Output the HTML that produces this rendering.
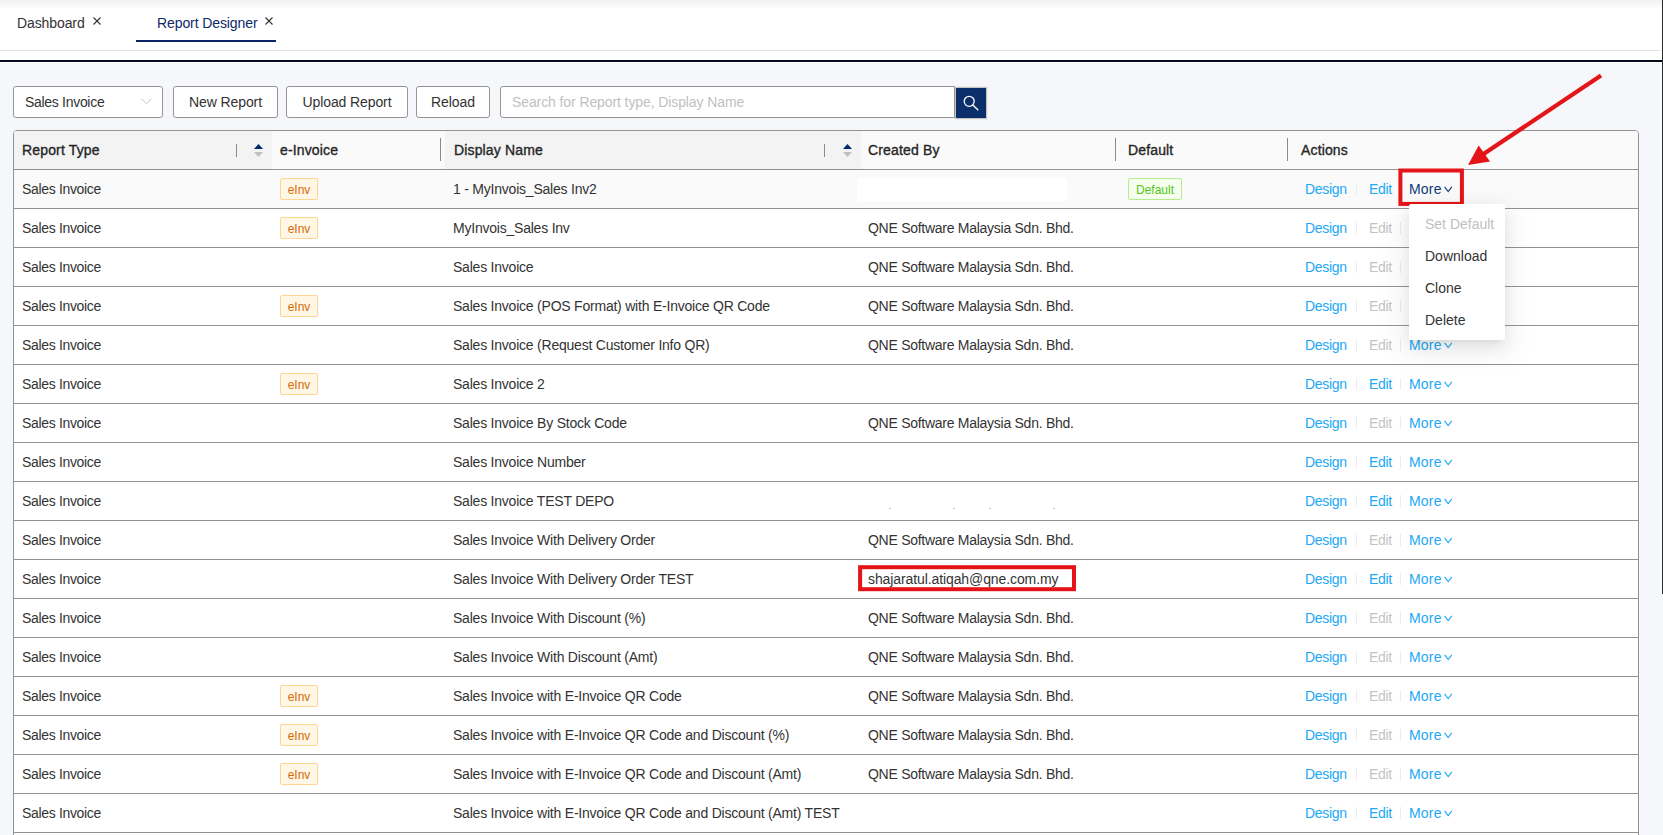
<!DOCTYPE html>
<html><head><meta charset="utf-8">
<style>
*{box-sizing:border-box}
html,body{margin:0;padding:0}
body{width:1663px;height:835px;overflow:hidden;position:relative;background:#f5f7fb;font-family:"Liberation Sans",sans-serif;font-size:14px;letter-spacing:-0.3px;color:#333}
.abs{position:absolute}
#hdr{position:absolute;left:0;top:0;width:1662px;height:63px;background:#fff}
#shade{position:absolute;left:0;top:0;width:1662px;height:9px;background:linear-gradient(#f1f1f1,#fff)}
#gline{position:absolute;left:0;top:50px;width:1661px;height:1px;background:#e2e2e2}
#dline{position:absolute;left:0;top:60px;width:1662px;height:2px;background:#030b1c}
#vline{position:absolute;left:1662px;top:0;width:1px;height:594px;background:#2a2a2a}
#vwhite{position:absolute;left:1661px;top:62px;width:1px;height:532px;background:#fff}
.tab{position:absolute;top:14px;line-height:18px;font-size:14px;letter-spacing:-0.1px;white-space:nowrap}
.x{position:absolute;top:17px}
#uline{position:absolute;left:136px;top:40px;width:140px;height:2px;background:#0a2466}
.btn{position:absolute;top:86px;height:32px;border:1px solid #959595;border-radius:3px;background:#fff;line-height:30px;text-align:center;white-space:nowrap;letter-spacing:-0.1px}
#sel{left:13px;width:150px;text-align:left;padding-left:11px;letter-spacing:-0.3px}
#search{position:absolute;left:500px;top:86px;width:455px;height:32px;border:1px solid #959595;border-radius:3px 0 0 3px;background:#fff;line-height:30px;padding-left:11px;color:#bfbfbf;white-space:nowrap;letter-spacing:-0.1px}
#sbtn{position:absolute;left:956px;top:88px;width:30px;height:30px;background:#0b2f6b;box-shadow:0 0 1px 1px rgba(120,100,80,.35)}
#tbl{position:absolute;left:13px;top:130px;width:1626px;height:720px;border:1px solid #939393;border-radius:4px 4px 0 0;background:#fff;overflow:hidden}
#thead{position:absolute;left:0;top:0;width:1624px;height:39px;background:#fafafa;border-bottom:1px solid #939393}
.sorted{position:absolute;top:0;height:38px;background:#f3f3f3}
.th{position:absolute;top:0;line-height:39px;font-weight:normal;-webkit-text-stroke:0.35px #262626;letter-spacing:0.15px;white-space:nowrap;color:#262626}
.sep{position:absolute;width:1px;background:#8a8a8a}
.row{position:absolute;left:0;width:1624px;height:39px;border-bottom:1px solid #939393;background:#fff}
.row.hover{background:#fafafa}
.c{position:absolute;top:0;line-height:38px;white-space:nowrap}
.tag{position:absolute;top:8px;height:22px;border:1px solid;border-radius:2px;font-size:12px;line-height:22px;letter-spacing:0;text-align:center;white-space:nowrap}
.einv{width:38px;color:#d46b08;background:#fff7e6;border-color:#ffd591}
.dflt{width:54px;color:#52c41a;background:#f6ffed;border-color:#b7eb8f}
.redact{position:absolute;left:843px;top:8px;width:210px;height:23px;background:#fff}
.dot{position:absolute;top:26px;width:2px;height:1px;background:#ccc}
.lnk{color:#22a8f5}
.dis{color:#c4c4c4}
.more1{color:#123a78}
.dv{position:absolute;top:13px;width:1px;height:12px;background:#ececec}
.chev{position:absolute;top:16px;left:33px}
.c .chev{position:absolute;top:16px;left:34.5px}
.redbox{position:absolute;border:3px solid #e21a1d}
#dd{position:absolute;left:1409px;top:204px;width:96px;height:136px;background:#fff;border-radius:2px;box-shadow:0 3px 6px -4px rgba(0,0,0,.12),0 6px 16px 0 rgba(0,0,0,.08),0 9px 28px 8px rgba(0,0,0,.05)}
.ddi{position:absolute;left:16px;white-space:nowrap;line-height:20px;letter-spacing:0}
</style></head><body>
<div id="hdr">
  <div id="shade"></div>
  <div class="tab" style="left:17px;color:#333">Dashboard</div>
  <svg class="x" style="left:93px" width="8" height="8" viewBox="0 0 8 8"><path d="M0.5 0.5L7.5 7.5M7.5 0.5L0.5 7.5" stroke="#333" stroke-width="1.1"/></svg>
  <div class="tab" style="left:157px;color:#0c2a66">Report Designer</div>
  <svg class="x" style="left:265px" width="8" height="8" viewBox="0 0 8 8"><path d="M0.5 0.5L7.5 7.5M7.5 0.5L0.5 7.5" stroke="#333" stroke-width="1.1"/></svg>
  <div id="uline"></div>
  <div id="gline"></div>
  <div id="dline"></div>
</div>
<div id="vwhite"></div>
<div id="vline"></div>

<div class="btn" id="sel">Sales Invoice<svg style="position:absolute;left:127px;top:11px" width="11" height="7" viewBox="0 0 11 7"><path d="M0.5 0.8L5.5 5.8L10.5 0.8" fill="none" stroke="#c4c4c4" stroke-width="1"/></svg></div>
<div class="btn" style="left:173px;width:105px">New Report</div>
<div class="btn" style="left:286px;width:122px">Upload Report</div>
<div class="btn" style="left:416px;width:74px">Reload</div>
<div id="search">Search for Report type, Display Name</div>
<div id="sbtn"><svg width="30" height="30" viewBox="0 0 30 30"><circle cx="13.2" cy="13.3" r="5" fill="none" stroke="#fff" stroke-width="1.3"/><path d="M16.8 17 L21.8 21.8" stroke="#fff" stroke-width="1.4" stroke-linecap="round"/></svg></div>

<div id="tbl">
 <div id="thead">
  <div class="sorted" style="left:0;width:258px"></div>
  <div class="sorted" style="left:431px;width:416px"></div>
  <div class="th" style="left:8px">Report Type</div>
  <div class="sep" style="left:222px;top:13px;height:13px"></div>
  <svg style="position:absolute;left:240px;top:13px" width="10" height="14" viewBox="0 0 10 14"><path d="M0 5L4.5 0L9 5Z" fill="#002a6e"/><path d="M0 8L4.5 13L9 8Z" fill="#bfbfbf"/></svg>
  <div class="th" style="left:266px">e-Invoice</div>
  <div class="sep" style="left:426px;top:7px;height:23px"></div>
  <div class="th" style="left:440px">Display Name</div>
  <div class="sep" style="left:810px;top:13px;height:13px"></div>
  <svg style="position:absolute;left:829px;top:13px" width="10" height="14" viewBox="0 0 10 14"><path d="M0 5L4.5 0L9 5Z" fill="#002a6e"/><path d="M0 8L4.5 13L9 8Z" fill="#bfbfbf"/></svg>
  <div class="th" style="left:854px">Created By</div>
  <div class="sep" style="left:1101px;top:7px;height:23px"></div>
  <div class="th" style="left:1114px">Default</div>
  <div class="sep" style="left:1273px;top:7px;height:23px"></div>
  <div class="th" style="left:1287px">Actions</div>
 </div>
</div>
<div class="row hover" style="left:14px;top:170px"><div class="c" style="left:8px;letter-spacing:-0.33px">Sales Invoice</div><div class="tag einv" style="left:266px">eInv</div><div class="c" style="left:439px;letter-spacing:-0.22px">1 - MyInvois_Sales Inv2</div><div class="redact"></div><div class="tag dflt" style="left:1114px">Default</div><div class="c lnk" style="left:1291px">Design</div><div class="dv" style="left:1342px"></div><div class="c lnk" style="left:1355px">Edit</div><div class="dv" style="left:1386px"></div><div class="c more1" style="left:1395px;letter-spacing:0.2px">More<svg class="chev" width="9" height="7" viewBox="0 0 9 7"><path d="M0.6 0.8 L4.2 5.6 L7.8 0.8" fill="none" stroke="currentColor" stroke-width="1.1"/></svg></div></div>
<div class="row" style="left:14px;top:209px"><div class="c" style="left:8px;letter-spacing:-0.33px">Sales Invoice</div><div class="tag einv" style="left:266px">eInv</div><div class="c" style="left:439px;letter-spacing:-0.22px">MyInvois_Sales Inv</div><div class="c" style="left:854px;letter-spacing:-0.27px">QNE Software Malaysia Sdn. Bhd.</div><div class="c lnk" style="left:1291px">Design</div><div class="dv" style="left:1342px"></div><div class="c dis" style="left:1355px">Edit</div><div class="dv" style="left:1386px"></div><div class="c lnk" style="left:1395px;letter-spacing:0.2px">More<svg class="chev" width="9" height="7" viewBox="0 0 9 7"><path d="M0.6 0.8 L4.2 5.6 L7.8 0.8" fill="none" stroke="currentColor" stroke-width="1.1"/></svg></div></div>
<div class="row" style="left:14px;top:248px"><div class="c" style="left:8px;letter-spacing:-0.33px">Sales Invoice</div><div class="c" style="left:439px;letter-spacing:-0.22px">Sales Invoice</div><div class="c" style="left:854px;letter-spacing:-0.27px">QNE Software Malaysia Sdn. Bhd.</div><div class="c lnk" style="left:1291px">Design</div><div class="dv" style="left:1342px"></div><div class="c dis" style="left:1355px">Edit</div><div class="dv" style="left:1386px"></div><div class="c lnk" style="left:1395px;letter-spacing:0.2px">More<svg class="chev" width="9" height="7" viewBox="0 0 9 7"><path d="M0.6 0.8 L4.2 5.6 L7.8 0.8" fill="none" stroke="currentColor" stroke-width="1.1"/></svg></div></div>
<div class="row" style="left:14px;top:287px"><div class="c" style="left:8px;letter-spacing:-0.33px">Sales Invoice</div><div class="tag einv" style="left:266px">eInv</div><div class="c" style="left:439px;letter-spacing:-0.22px">Sales Invoice (POS Format) with E-Invoice QR Code</div><div class="c" style="left:854px;letter-spacing:-0.27px">QNE Software Malaysia Sdn. Bhd.</div><div class="c lnk" style="left:1291px">Design</div><div class="dv" style="left:1342px"></div><div class="c dis" style="left:1355px">Edit</div><div class="dv" style="left:1386px"></div><div class="c lnk" style="left:1395px;letter-spacing:0.2px">More<svg class="chev" width="9" height="7" viewBox="0 0 9 7"><path d="M0.6 0.8 L4.2 5.6 L7.8 0.8" fill="none" stroke="currentColor" stroke-width="1.1"/></svg></div></div>
<div class="row" style="left:14px;top:326px"><div class="c" style="left:8px;letter-spacing:-0.33px">Sales Invoice</div><div class="c" style="left:439px;letter-spacing:-0.22px">Sales Invoice (Request Customer Info QR)</div><div class="c" style="left:854px;letter-spacing:-0.27px">QNE Software Malaysia Sdn. Bhd.</div><div class="c lnk" style="left:1291px">Design</div><div class="dv" style="left:1342px"></div><div class="c dis" style="left:1355px">Edit</div><div class="dv" style="left:1386px"></div><div class="c lnk" style="left:1395px;letter-spacing:0.2px">More<svg class="chev" width="9" height="7" viewBox="0 0 9 7"><path d="M0.6 0.8 L4.2 5.6 L7.8 0.8" fill="none" stroke="currentColor" stroke-width="1.1"/></svg></div></div>
<div class="row" style="left:14px;top:365px"><div class="c" style="left:8px;letter-spacing:-0.33px">Sales Invoice</div><div class="tag einv" style="left:266px">eInv</div><div class="c" style="left:439px;letter-spacing:-0.22px">Sales Invoice 2</div><div class="c lnk" style="left:1291px">Design</div><div class="dv" style="left:1342px"></div><div class="c lnk" style="left:1355px">Edit</div><div class="dv" style="left:1386px"></div><div class="c lnk" style="left:1395px;letter-spacing:0.2px">More<svg class="chev" width="9" height="7" viewBox="0 0 9 7"><path d="M0.6 0.8 L4.2 5.6 L7.8 0.8" fill="none" stroke="currentColor" stroke-width="1.1"/></svg></div></div>
<div class="row" style="left:14px;top:404px"><div class="c" style="left:8px;letter-spacing:-0.33px">Sales Invoice</div><div class="c" style="left:439px;letter-spacing:-0.22px">Sales Invoice By Stock Code</div><div class="c" style="left:854px;letter-spacing:-0.27px">QNE Software Malaysia Sdn. Bhd.</div><div class="c lnk" style="left:1291px">Design</div><div class="dv" style="left:1342px"></div><div class="c dis" style="left:1355px">Edit</div><div class="dv" style="left:1386px"></div><div class="c lnk" style="left:1395px;letter-spacing:0.2px">More<svg class="chev" width="9" height="7" viewBox="0 0 9 7"><path d="M0.6 0.8 L4.2 5.6 L7.8 0.8" fill="none" stroke="currentColor" stroke-width="1.1"/></svg></div></div>
<div class="row" style="left:14px;top:443px"><div class="c" style="left:8px;letter-spacing:-0.33px">Sales Invoice</div><div class="c" style="left:439px;letter-spacing:-0.22px">Sales Invoice Number</div><div class="c lnk" style="left:1291px">Design</div><div class="dv" style="left:1342px"></div><div class="c lnk" style="left:1355px">Edit</div><div class="dv" style="left:1386px"></div><div class="c lnk" style="left:1395px;letter-spacing:0.2px">More<svg class="chev" width="9" height="7" viewBox="0 0 9 7"><path d="M0.6 0.8 L4.2 5.6 L7.8 0.8" fill="none" stroke="currentColor" stroke-width="1.1"/></svg></div></div>
<div class="row" style="left:14px;top:482px"><div class="c" style="left:8px;letter-spacing:-0.33px">Sales Invoice</div><div class="c" style="left:439px;letter-spacing:-0.22px">Sales Invoice TEST DEPO</div><div class="dot" style="left:875px"></div><div class="dot" style="left:939px"></div><div class="dot" style="left:975px"></div><div class="dot" style="left:1039px"></div><div class="c lnk" style="left:1291px">Design</div><div class="dv" style="left:1342px"></div><div class="c lnk" style="left:1355px">Edit</div><div class="dv" style="left:1386px"></div><div class="c lnk" style="left:1395px;letter-spacing:0.2px">More<svg class="chev" width="9" height="7" viewBox="0 0 9 7"><path d="M0.6 0.8 L4.2 5.6 L7.8 0.8" fill="none" stroke="currentColor" stroke-width="1.1"/></svg></div></div>
<div class="row" style="left:14px;top:521px"><div class="c" style="left:8px;letter-spacing:-0.33px">Sales Invoice</div><div class="c" style="left:439px;letter-spacing:-0.22px">Sales Invoice With Delivery Order</div><div class="c" style="left:854px;letter-spacing:-0.27px">QNE Software Malaysia Sdn. Bhd.</div><div class="c lnk" style="left:1291px">Design</div><div class="dv" style="left:1342px"></div><div class="c dis" style="left:1355px">Edit</div><div class="dv" style="left:1386px"></div><div class="c lnk" style="left:1395px;letter-spacing:0.2px">More<svg class="chev" width="9" height="7" viewBox="0 0 9 7"><path d="M0.6 0.8 L4.2 5.6 L7.8 0.8" fill="none" stroke="currentColor" stroke-width="1.1"/></svg></div></div>
<div class="row" style="left:14px;top:560px"><div class="c" style="left:8px;letter-spacing:-0.33px">Sales Invoice</div><div class="c" style="left:439px;letter-spacing:-0.22px">Sales Invoice With Delivery Order TEST</div><div class="c" style="left:854px;letter-spacing:-0.1px">shajaratul.atiqah@qne.com.my</div><div class="c lnk" style="left:1291px">Design</div><div class="dv" style="left:1342px"></div><div class="c lnk" style="left:1355px">Edit</div><div class="dv" style="left:1386px"></div><div class="c lnk" style="left:1395px;letter-spacing:0.2px">More<svg class="chev" width="9" height="7" viewBox="0 0 9 7"><path d="M0.6 0.8 L4.2 5.6 L7.8 0.8" fill="none" stroke="currentColor" stroke-width="1.1"/></svg></div></div>
<div class="row" style="left:14px;top:599px"><div class="c" style="left:8px;letter-spacing:-0.33px">Sales Invoice</div><div class="c" style="left:439px;letter-spacing:-0.22px">Sales Invoice With Discount (%)</div><div class="c" style="left:854px;letter-spacing:-0.27px">QNE Software Malaysia Sdn. Bhd.</div><div class="c lnk" style="left:1291px">Design</div><div class="dv" style="left:1342px"></div><div class="c dis" style="left:1355px">Edit</div><div class="dv" style="left:1386px"></div><div class="c lnk" style="left:1395px;letter-spacing:0.2px">More<svg class="chev" width="9" height="7" viewBox="0 0 9 7"><path d="M0.6 0.8 L4.2 5.6 L7.8 0.8" fill="none" stroke="currentColor" stroke-width="1.1"/></svg></div></div>
<div class="row" style="left:14px;top:638px"><div class="c" style="left:8px;letter-spacing:-0.33px">Sales Invoice</div><div class="c" style="left:439px;letter-spacing:-0.22px">Sales Invoice With Discount (Amt)</div><div class="c" style="left:854px;letter-spacing:-0.27px">QNE Software Malaysia Sdn. Bhd.</div><div class="c lnk" style="left:1291px">Design</div><div class="dv" style="left:1342px"></div><div class="c dis" style="left:1355px">Edit</div><div class="dv" style="left:1386px"></div><div class="c lnk" style="left:1395px;letter-spacing:0.2px">More<svg class="chev" width="9" height="7" viewBox="0 0 9 7"><path d="M0.6 0.8 L4.2 5.6 L7.8 0.8" fill="none" stroke="currentColor" stroke-width="1.1"/></svg></div></div>
<div class="row" style="left:14px;top:677px"><div class="c" style="left:8px;letter-spacing:-0.33px">Sales Invoice</div><div class="tag einv" style="left:266px">eInv</div><div class="c" style="left:439px;letter-spacing:-0.22px">Sales Invoice with E-Invoice QR Code</div><div class="c" style="left:854px;letter-spacing:-0.27px">QNE Software Malaysia Sdn. Bhd.</div><div class="c lnk" style="left:1291px">Design</div><div class="dv" style="left:1342px"></div><div class="c dis" style="left:1355px">Edit</div><div class="dv" style="left:1386px"></div><div class="c lnk" style="left:1395px;letter-spacing:0.2px">More<svg class="chev" width="9" height="7" viewBox="0 0 9 7"><path d="M0.6 0.8 L4.2 5.6 L7.8 0.8" fill="none" stroke="currentColor" stroke-width="1.1"/></svg></div></div>
<div class="row" style="left:14px;top:716px"><div class="c" style="left:8px;letter-spacing:-0.33px">Sales Invoice</div><div class="tag einv" style="left:266px">eInv</div><div class="c" style="left:439px;letter-spacing:-0.22px">Sales Invoice with E-Invoice QR Code and Discount (%)</div><div class="c" style="left:854px;letter-spacing:-0.27px">QNE Software Malaysia Sdn. Bhd.</div><div class="c lnk" style="left:1291px">Design</div><div class="dv" style="left:1342px"></div><div class="c dis" style="left:1355px">Edit</div><div class="dv" style="left:1386px"></div><div class="c lnk" style="left:1395px;letter-spacing:0.2px">More<svg class="chev" width="9" height="7" viewBox="0 0 9 7"><path d="M0.6 0.8 L4.2 5.6 L7.8 0.8" fill="none" stroke="currentColor" stroke-width="1.1"/></svg></div></div>
<div class="row" style="left:14px;top:755px"><div class="c" style="left:8px;letter-spacing:-0.33px">Sales Invoice</div><div class="tag einv" style="left:266px">eInv</div><div class="c" style="left:439px;letter-spacing:-0.22px">Sales Invoice with E-Invoice QR Code and Discount (Amt)</div><div class="c" style="left:854px;letter-spacing:-0.27px">QNE Software Malaysia Sdn. Bhd.</div><div class="c lnk" style="left:1291px">Design</div><div class="dv" style="left:1342px"></div><div class="c dis" style="left:1355px">Edit</div><div class="dv" style="left:1386px"></div><div class="c lnk" style="left:1395px;letter-spacing:0.2px">More<svg class="chev" width="9" height="7" viewBox="0 0 9 7"><path d="M0.6 0.8 L4.2 5.6 L7.8 0.8" fill="none" stroke="currentColor" stroke-width="1.1"/></svg></div></div>
<div class="row" style="left:14px;top:794px"><div class="c" style="left:8px;letter-spacing:-0.33px">Sales Invoice</div><div class="c" style="left:439px;letter-spacing:-0.22px">Sales Invoice with E-Invoice QR Code and Discount (Amt) TEST</div><div class="c lnk" style="left:1291px">Design</div><div class="dv" style="left:1342px"></div><div class="c lnk" style="left:1355px">Edit</div><div class="dv" style="left:1386px"></div><div class="c lnk" style="left:1395px;letter-spacing:0.2px">More<svg class="chev" width="9" height="7" viewBox="0 0 9 7"><path d="M0.6 0.8 L4.2 5.6 L7.8 0.8" fill="none" stroke="currentColor" stroke-width="1.1"/></svg></div></div>
<svg style="position:absolute;left:0;top:0" width="1663" height="835"><rect x="1400.4" y="170.5" width="61.5" height="33.4" fill="none" stroke="#e31519" stroke-width="4"/><rect x="860.1" y="567.2" width="213.9" height="22" fill="none" stroke="#e31519" stroke-width="4"/><path d="M1601 75.5 L1482 155" stroke="#e31519" stroke-width="4.2" stroke-linecap="butt"/><path d="M1468 165 L1478.7 145.5 L1490 161.5 Z" fill="#e31519"/></svg>
<div id="dd">
  <div class="ddi" style="top:10px;color:#bfbfbf">Set Default</div>
  <div class="ddi" style="top:42px">Download</div>
  <div class="ddi" style="top:74px">Clone</div>
  <div class="ddi" style="top:106px">Delete</div>
</div>
</body></html>
